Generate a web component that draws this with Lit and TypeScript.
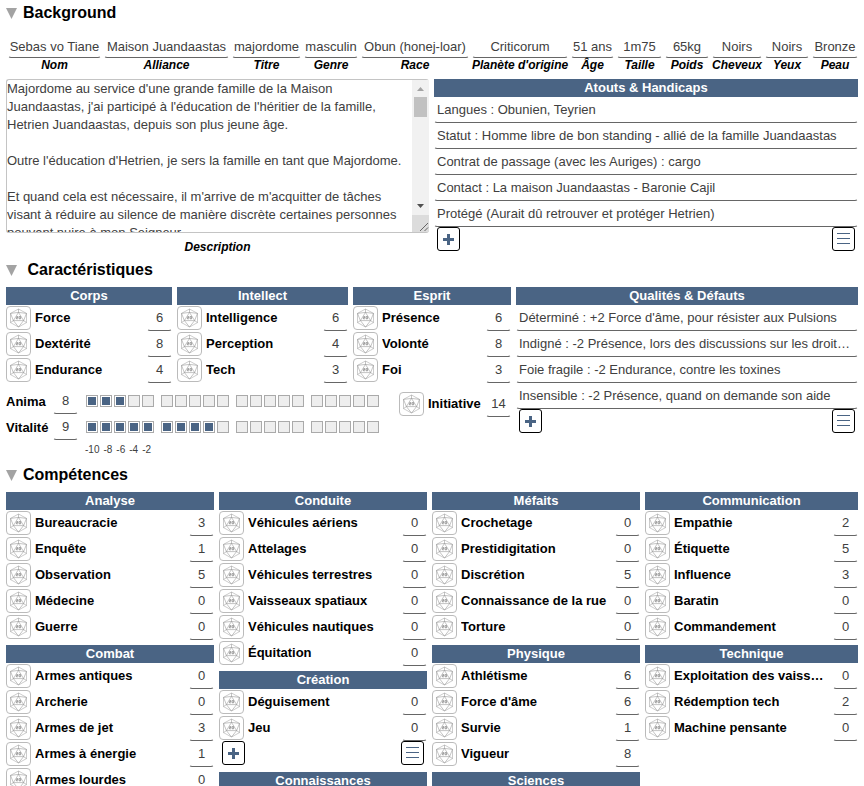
import { LitElement, html, css } from "lit";
import { customElement, property } from "lit/decorators.js";

type Entry = [label: string, value: string];

interface SkillGroup {
  title: string;
  skills: Entry[];
  editable?: boolean;
}

const IDENTITY: Entry[] = [
  ["Nom", "Sebas vo Tiane"],
  ["Alliance", "Maison Juandaastas"],
  ["Titre", "majordome"],
  ["Genre", "masculin"],
  ["Race", "Obun (honej-loar)"],
  ["Planète d'origine", "Criticorum"],
  ["Âge", "51 ans"],
  ["Taille", "1m75"],
  ["Poids", "65kg"],
  ["Cheveux", "Noirs"],
  ["Yeux", "Noirs"],
  ["Peau", "Bronze"],
];

const DESCRIPTION = `Majordome au service d'une grande famille de la Maison Juandaastas, j'ai participé à l'éducation de l'héritier de la famille, Hetrien Juandaastas, depuis son plus jeune âge.

Outre l'éducation d'Hetrien, je sers la famille en tant que Majordome.

Et quand cela est nécessaire, il m'arrive de m'acquitter de tâches visant à réduire au silence de manière discrète certaines personnes pouvant nuire à mon Seigneur.`;

const ASSETS = [
  "Langues : Obunien, Teyrien",
  "Statut : Homme libre de bon standing - allié de la famille Juandaastas",
  "Contrat de passage (avec les Auriges) : cargo",
  "Contact : La maison Juandaastas - Baronie Cajil",
  "Protégé (Aurait dû retrouver et protéger Hetrien)",
];

const QUALITIES = [
  "Déterminé : +2 Force d'âme, pour résister aux Pulsions",
  "Indigné : -2 Présence, lors des discussions sur les droits des peuples",
  "Foie fragile : -2 Endurance, contre les toxines",
  "Insensible : -2 Présence, quand on demande son aide",
];

const ATTRIBUTES: SkillGroup[] = [
  { title: "Corps", skills: [["Force", "6"], ["Dextérité", "8"], ["Endurance", "4"]] },
  { title: "Intellect", skills: [["Intelligence", "6"], ["Perception", "4"], ["Tech", "3"]] },
  { title: "Esprit", skills: [["Présence", "6"], ["Volonté", "8"], ["Foi", "3"]] },
];

const SKILLS: SkillGroup[][] = [
  [
    { title: "Analyse", skills: [["Bureaucracie", "3"], ["Enquête", "1"], ["Observation", "5"], ["Médecine", "0"], ["Guerre", "0"]] },
    { title: "Combat", skills: [["Armes antiques", "0"], ["Archerie", "0"], ["Armes de jet", "3"], ["Armes à énergie", "1"], ["Armes lourdes", "0"]] },
  ],
  [
    { title: "Conduite", skills: [["Véhicules aériens", "0"], ["Attelages", "0"], ["Véhicules terrestres", "0"], ["Vaisseaux spatiaux", "0"], ["Véhicules nautiques", "0"], ["Équitation", "0"]] },
    { title: "Création", skills: [["Déguisement", "0"], ["Jeu", "0"]], editable: true },
    { title: "Connaissances", skills: [] },
  ],
  [
    { title: "Méfaits", skills: [["Crochetage", "0"], ["Prestidigitation", "0"], ["Discrétion", "5"], ["Connaissance de la rue", "0"], ["Torture", "0"]] },
    { title: "Physique", skills: [["Athlétisme", "6"], ["Force d'âme", "6"], ["Survie", "1"], ["Vigueur", "8"]] },
    { title: "Sciences", skills: [] },
  ],
  [
    { title: "Communication", skills: [["Empathie", "2"], ["Étiquette", "5"], ["Influence", "3"], ["Baratin", "0"], ["Commandement", "0"]] },
    { title: "Technique", skills: [["Exploitation des vaisseaux", "0"], ["Rédemption tech", "2"], ["Machine pensante", "0"]] },
  ],
];

const base = css`
  * {
    box-sizing: border-box;
  }
  input,
  textarea,
  button {
    font: inherit;
    margin: 0;
  }
  .field {
    display: block;
    width: 100%;
    min-width: 0;
    height: 26px;
    padding: 0 2px;
    border: 1px solid transparent;
    border-bottom-color: #666;
    border-radius: 3px;
    outline: none;
    background: transparent;
    color: #404040;
    text-overflow: ellipsis;
  }
  .bar {
    margin: 0;
    height: 18px;
    line-height: 18px;
    font-size: 13px;
    font-weight: bold;
    text-align: center;
    color: #fff;
    background: #4a6484;
  }
`;

@customElement("stat-row")
export class StatRow extends LitElement {
  @property() label = "";
  @property() value = "";

  static styles = [
    base,
    css`
      :host {
        display: flex;
        align-items: center;
        gap: 4px;
        height: 26px;
      }
      .roll {
        flex: none;
        display: grid;
        place-items: center;
        width: 25px;
        height: 24px;
        padding: 0;
        border: 1px solid #bbb;
        border-radius: 4px;
        background: #fff;
      }
      .name {
        flex: 1;
        min-width: 0;
        overflow: hidden;
        white-space: nowrap;
        text-overflow: ellipsis;
        font-weight: bold;
        line-height: 26px;
      }
      .value {
        flex: none;
        width: 25px;
        padding: 0 0 2px;
        text-align: center;
      }
    `,
  ];

  render() {
    return html`
      <button class="roll" type="button" aria-label="Lancer ${this.label}">
        <svg width="19" height="20" viewBox="0 0 19 20" fill="none" stroke="#888" stroke-width="0.5" stroke-linejoin="round">
          <path d="M9.5 1 17.5 5.4V14.6L9.5 19 1.5 14.6V5.4Z" stroke="#999" />
          <path d="M9.5 4.4 4.4 12.6H14.6Z" />
          <path d="M9.5 1V4.4M1.5 5.4 9.5 4.4 17.5 5.4M1.5 5.4 4.4 12.6 1.5 14.6M17.5 5.4 14.6 12.6 17.5 14.6M4.4 12.6 9.5 19 14.6 12.6" />
          <path d="M7.4 8.6H8.9V9.6H7.4V10.8H8.9M10.1 8.6H11.600V10.8H10.1Z" stroke="#666" stroke-width="0.6" />
        </svg>
      </button>
      <label class="name" for="v">${this.label}</label>
      <input class="field value" id="v" .value=${this.value} />
    `;
  }
}

@customElement("list-controls")
export class ListControls extends LitElement {
  static styles = css`
    :host {
      display: flex;
      justify-content: space-between;
      height: 26px;
      padding: 0 3px;
    }
    .control {
      box-sizing: border-box;
      display: grid;
      place-items: center;
      width: 23px;
      height: 24px;
      padding: 0;
      border: 1px solid #000;
      border-radius: 3px;
      background: #fff;
    }
  `;

  render() {
    return html`
      <button class="control" type="button" aria-label="Ajouter">
        <svg width="13" height="14" viewBox="0 0 13 14">
          <path d="M5 2H8V6H12V9H8V13H5V9H1V6H5Z" fill="#4a6484" />
        </svg>
      </button>
      <button class="control" type="button" aria-label="Modifier">
        <svg width="13" height="14" viewBox="0 0 13 14" stroke="#4a6484">
          <path d="M0 1.5H13M0 6.5H13M0 11.5H13" />
        </svg>
      </button>
    `;
  }
}

@customElement("app-root")
export class AppRoot extends LitElement {
  static styles = [
    base,
    css`
      :host {
        display: block;
        height: 100vh;
        overflow-y: auto;
        scrollbar-width: none;
        background: #fff;
        color: #000;
        font: 13px "Liberation Sans", Arial, sans-serif;
      }
      .sheet {
        padding: 0 6px;
      }
      .heading {
        margin: 0 0 4px;
        font-size: 16px;
      }
      .toggle {
        display: flex;
        align-items: center;
        gap: 6px;
        height: 26px;
        padding: 0;
        border: 0;
        background: none;
        color: inherit;
        line-height: 28px;
        white-space: pre;
      }
      .identity {
        display: grid;
        grid-template-columns: 93fr 125fr 69fr 54fr 108fr 96fr 43fr 45fr 44fr 50fr 44fr 46fr;
        gap: 3px;
        padding: 2px 0 7px 2px;
      }
      .trait {
        display: flex;
        flex-direction: column-reverse;
        min-width: 0;
      }
      .trait .field {
        padding: 2px 0 0;
        text-align: center;
      }
      .caption {
        font-size: 12px;
        font-style: italic;
        font-weight: bold;
        line-height: 14px;
        text-align: center;
        white-space: nowrap;
      }
      .caption.tall {
        display: block;
        padding-top: 4px;
        line-height: 20px;
      }
      .background {
        display: grid;
        grid-template-columns: 423fr 424fr;
        gap: 5px;
      }
      .story {
        display: flex;
        height: 154px;
        border: 1px solid #c4c4c4;
        border-right: 0;
        border-radius: 3px;
      }
      .text {
        flex: 1;
        min-width: 0;
        padding: 0;
        border: 0;
        outline: none;
        resize: none;
        scrollbar-width: none;
        line-height: 18px;
        color: #404040;
        background: transparent;
      }
      .scroll {
        flex: none;
        display: flex;
        flex-direction: column;
        width: 17px;
        background: #f1f1f1;
      }
      .thumb {
        width: 13px;
        height: 20px;
        margin: 0 2px auto;
        background: #c1c1c1;
      }
      .list .field {
        padding-bottom: 2px;
      }
      .traits {
        display: grid;
        grid-template-columns: 505fr 342fr;
        gap: 5px;
        margin-bottom: 4px;
      }
      .attributes {
        display: grid;
        grid-template-columns: 166fr 171fr 158fr;
        gap: 5px;
      }
      .gauges {
        display: flex;
        justify-content: space-between;
        align-items: flex-start;
        padding-top: 5px;
      }
      .initiative {
        width: 112px;
        margin-top: 3px;
      }
      .gauge {
        display: flex;
        align-items: center;
        height: 26px;
      }
      .gauge-name {
        width: 47px;
        font-weight: bold;
      }
      .gauge .field {
        width: 25px;
        padding: 0 0 2px;
        text-align: center;
      }
      .boxes {
        display: flex;
        gap: 7px;
        padding-left: 8px;
      }
      .five {
        display: flex;
        gap: 2px;
      }
      .box {
        appearance: none;
        width: 12px;
        height: 12px;
        padding: 1px;
        border: 1px solid #aaa;
        background: #eee;
      }
      .box:checked {
        background: #4a6484 content-box;
      }
      .scale {
        display: flex;
        gap: 4px;
        padding-left: 79px;
        height: 18px;
        font-size: 10px;
        line-height: 20px;
        color: #404040;
      }
      .skills {
        display: grid;
        grid-template-columns: 208fr 208fr 208fr 213fr;
        gap: 5px;
        align-items: start;
      }
      .column {
        display: flex;
        flex-direction: column;
        gap: 5px;
        min-width: 0;
      }
    `,
  ];

  private heading(text: string) {
    return html`<h2 class="heading">
      <button class="toggle" type="button"><svg width="11" height="11" viewBox="0 0 11 11"><path d="M0 0H11L5.5 11Z" fill="#a3a3a3" /></svg><span>${text}</span></button>
    </h2>`;
  }

  private group(g: SkillGroup) {
    return html`<section>
      <h3 class="bar">${g.title}</h3>
      ${g.skills.map(([label, value]) => html`<stat-row .label=${label} .value=${value}></stat-row>`)}
      ${g.editable ? html`<list-controls></list-controls>` : ""}
    </section>`;
  }

  private list(title: string, items: string[]) {
    return html`<section class="list">
      <h3 class="bar">${title}</h3>
      ${items.map((item) => html`<input class="field" aria-label=${title} .value=${item} />`)}
      <list-controls></list-controls>
    </section>`;
  }

  private gauge(id: string, name: string, value: number, filled: number) {
    return html`<div class="gauge">
      <label class="gauge-name" for=${id}>${name}</label>
      <input class="field" id=${id} .value=${String(value)} />
      <div class="boxes">
        ${[0, 1, 2, 3].map(
          (g) => html`<div class="five">
            ${[1, 2, 3, 4, 5].map(
              (n) => html`<input class="box" type="checkbox" aria-label="${name} ${g * 5 + n}" .checked=${g * 5 + n <= filled} />`
            )}
          </div>`
        )}
      </div>
    </div>`;
  }

  render() {
    return html`<main class="sheet">
      ${this.heading("Background")}
      <div class="identity">
        ${IDENTITY.map(
          ([label, value], i) => html`<div class="trait">
            <label class="caption" for="trait-${i}">${label}</label>
            <input class="field" id="trait-${i}" .value=${value} />
          </div>`
        )}
      </div>
      <div class="background">
        <div>
          <div class="story">
            <textarea class="text" id="description" .value=${DESCRIPTION}></textarea>
            <div class="scroll" aria-hidden="true">
              <svg width="17" height="17" viewBox="0 0 17 17"><path d="M5 11H12L8.5 7Z" fill="#a3a3a3" /></svg>
              <div class="thumb"></div>
              <svg width="17" height="17" viewBox="0 0 17 17"><path d="M5 6H12L8.5 10Z" fill="#505050" /></svg>
              <svg width="17" height="17" viewBox="0 0 17 17">
                <rect width="17" height="17" fill="#dcdcdc" />
                <path d="M8 16 16 8M12.5 16 16 12.5" stroke="#666" />
              </svg>
            </div>
          </div>
          <label class="caption tall" for="description">Description</label>
        </div>
        ${this.list("Atouts & Handicaps", ASSETS)}
      </div>
      ${this.heading("\u00a0Caractéristiques")}
      <div class="traits">
        <div>
          <div class="attributes">${ATTRIBUTES.map((g) => this.group(g))}</div>
          <div class="gauges">
            <div>
              ${this.gauge("anima", "Anima", 8, 3)} ${this.gauge("vitality", "Vitalité", 9, 9)}
              <div class="scale">${["-10", "-8", "-6", "-4", "-2"].map((n) => html`<span>${n}</span>`)}</div>
            </div>
            <stat-row class="initiative" label="Initiative" value="14"></stat-row>
          </div>
        </div>
        ${this.list("Qualités & Défauts", QUALITIES)}
      </div>
      ${this.heading("Compétences")}
      <div class="skills">
        ${SKILLS.map((column) => html`<div class="column">${column.map((g) => this.group(g))}</div>`)}
      </div>
    </main>`;
  }
}
